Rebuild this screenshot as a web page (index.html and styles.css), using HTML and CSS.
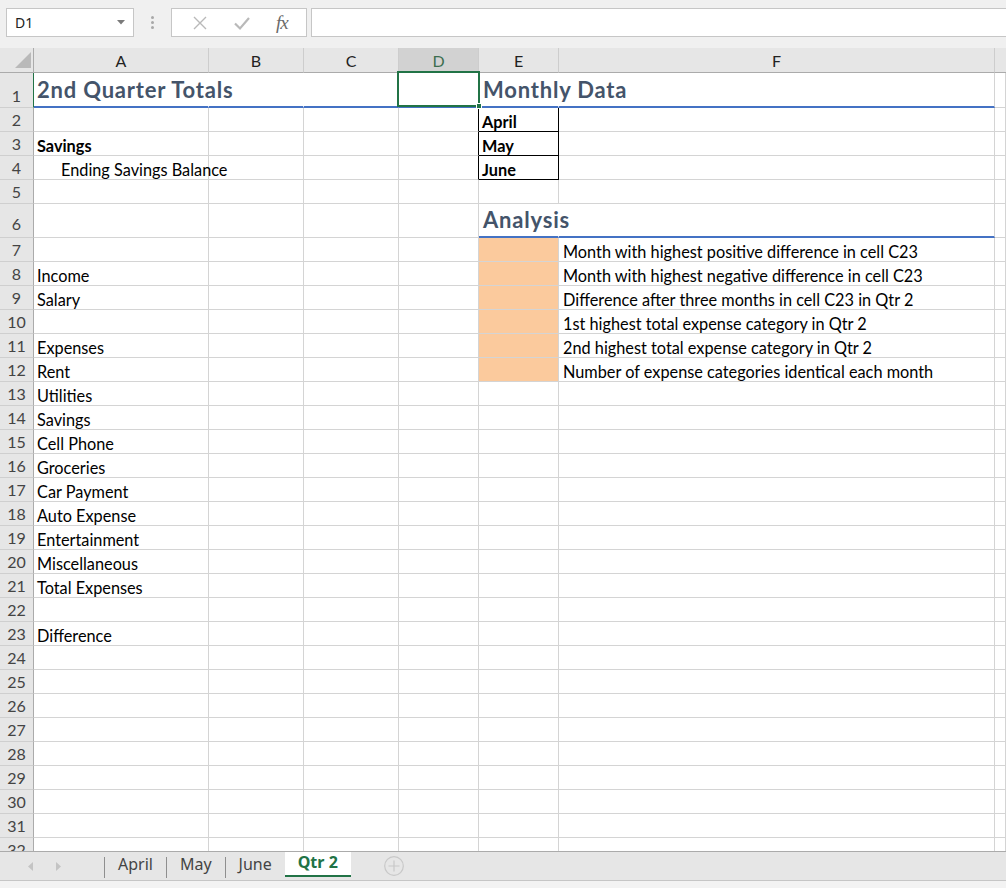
FILE: index.html
```html
<!DOCTYPE html>
<html>
<head>
<meta charset="utf-8">
<link rel="stylesheet" href="styles.css">
</head>
<body>
<div class="toolbar">
  <div class="namebox"><span>D1</span><svg class="dd" width="8" height="5" viewBox="0 0 8 5"><path d="M0 0H8L4 4.5Z" fill="#7a7a7a"/></svg></div>
  <div class="dots"><i></i><i></i><i></i></div>
  <div class="fbuttons">
    <svg width="16" height="16" viewBox="0 0 16 16"><path d="M2 2L14 14M14 2L2 14" stroke="#b9b9b9" stroke-width="1.4" fill="none"/></svg>
    <svg width="18" height="16" viewBox="0 0 18 16"><path d="M2 8.5L7 13.5L16 3" stroke="#b9b9b9" stroke-width="2.2" fill="none"/></svg>
    <span class="fx">fx</span>
  </div>
  <div class="finput"></div>
</div>

<div class="sheet">
  <div class="row hdr">
    <div class="corner"><svg width="34" height="24" viewBox="0 0 34 24"><path d="M15 20H31V4Z" fill="#b9b9b9"/></svg></div>
    <div class="hc">A</div><div class="hc">B</div><div class="hc">C</div><div class="hc sel">D</div><div class="hc">E</div><div class="hc">F</div><div class="hc last"></div>
  </div>
  <div class="row r1">
    <div class="rh selrow">1</div>
    <div class="c t bl nr"><span class="title">2nd Quarter Totals</span></div>
    <div class="c t bl nr"></div><div class="c t bl"></div><div class="c t bl"></div>
    <div class="c t bl nr e"><span class="title">Monthly Data</span></div>
    <div class="c t bl"></div><div class="c"></div>
  </div>
  <div class="row"><div class="rh">2</div><div class="c"></div><div class="c"></div><div class="c"></div><div class="c kr"></div><div class="c box b">April</div><div class="c"></div><div class="c"></div></div>
  <div class="row"><div class="rh">3</div><div class="c b">Savings</div><div class="c"></div><div class="c"></div><div class="c kr"></div><div class="c box b">May</div><div class="c"></div><div class="c"></div></div>
  <div class="row"><div class="rh">4</div><div class="c ind">Ending Savings Balance</div><div class="c"></div><div class="c"></div><div class="c kr"></div><div class="c box b">June</div><div class="c"></div><div class="c"></div></div>
  <div class="row"><div class="rh">5</div><div class="c"></div><div class="c"></div><div class="c"></div><div class="c"></div><div class="c"></div><div class="c"></div><div class="c"></div></div>
  <div class="row r6">
    <div class="rh">6</div><div class="c"></div><div class="c"></div><div class="c"></div><div class="c"></div>
    <div class="c t bl nr e"><span class="title">Analysis</span></div>
    <div class="c t bl"></div><div class="c"></div>
  </div>
  <div class="row"><div class="rh">7</div><div class="c"></div><div class="c"></div><div class="c"></div><div class="c"></div><div class="c or"></div><div class="c f">Month with highest positive difference in cell C23</div><div class="c"></div></div>
  <div class="row"><div class="rh">8</div><div class="c">Income</div><div class="c"></div><div class="c"></div><div class="c"></div><div class="c or"></div><div class="c f">Month with highest negative difference in cell C23</div><div class="c"></div></div>
  <div class="row"><div class="rh">9</div><div class="c">Salary</div><div class="c"></div><div class="c"></div><div class="c"></div><div class="c or"></div><div class="c f">Difference after three months in cell C23 in Qtr 2</div><div class="c"></div></div>
  <div class="row"><div class="rh">10</div><div class="c"></div><div class="c"></div><div class="c"></div><div class="c"></div><div class="c or"></div><div class="c f">1st highest total expense category in Qtr 2</div><div class="c"></div></div>
  <div class="row"><div class="rh">11</div><div class="c">Expenses</div><div class="c"></div><div class="c"></div><div class="c"></div><div class="c or"></div><div class="c f">2nd highest total expense category in Qtr 2</div><div class="c"></div></div>
  <div class="row"><div class="rh">12</div><div class="c">Rent</div><div class="c"></div><div class="c"></div><div class="c"></div><div class="c or"></div><div class="c f">Number of expense categories identical each month</div><div class="c"></div></div>
  <div class="row"><div class="rh">13</div><div class="c">Utilities</div><div class="c"></div><div class="c"></div><div class="c"></div><div class="c"></div><div class="c"></div><div class="c"></div></div>
  <div class="row"><div class="rh">14</div><div class="c">Savings</div><div class="c"></div><div class="c"></div><div class="c"></div><div class="c"></div><div class="c"></div><div class="c"></div></div>
  <div class="row"><div class="rh">15</div><div class="c">Cell Phone</div><div class="c"></div><div class="c"></div><div class="c"></div><div class="c"></div><div class="c"></div><div class="c"></div></div>
  <div class="row"><div class="rh">16</div><div class="c">Groceries</div><div class="c"></div><div class="c"></div><div class="c"></div><div class="c"></div><div class="c"></div><div class="c"></div></div>
  <div class="row"><div class="rh">17</div><div class="c">Car Payment</div><div class="c"></div><div class="c"></div><div class="c"></div><div class="c"></div><div class="c"></div><div class="c"></div></div>
  <div class="row"><div class="rh">18</div><div class="c">Auto Expense</div><div class="c"></div><div class="c"></div><div class="c"></div><div class="c"></div><div class="c"></div><div class="c"></div></div>
  <div class="row"><div class="rh">19</div><div class="c">Entertainment</div><div class="c"></div><div class="c"></div><div class="c"></div><div class="c"></div><div class="c"></div><div class="c"></div></div>
  <div class="row"><div class="rh">20</div><div class="c">Miscellaneous</div><div class="c"></div><div class="c"></div><div class="c"></div><div class="c"></div><div class="c"></div><div class="c"></div></div>
  <div class="row"><div class="rh">21</div><div class="c">Total Expenses</div><div class="c"></div><div class="c"></div><div class="c"></div><div class="c"></div><div class="c"></div><div class="c"></div></div>
  <div class="row"><div class="rh">22</div><div class="c"></div><div class="c"></div><div class="c"></div><div class="c"></div><div class="c"></div><div class="c"></div><div class="c"></div></div>
  <div class="row"><div class="rh">23</div><div class="c">Difference</div><div class="c"></div><div class="c"></div><div class="c"></div><div class="c"></div><div class="c"></div><div class="c"></div></div>
  <div class="row"><div class="rh">24</div><div class="c"></div><div class="c"></div><div class="c"></div><div class="c"></div><div class="c"></div><div class="c"></div><div class="c"></div></div>
  <div class="row"><div class="rh">25</div><div class="c"></div><div class="c"></div><div class="c"></div><div class="c"></div><div class="c"></div><div class="c"></div><div class="c"></div></div>
  <div class="row"><div class="rh">26</div><div class="c"></div><div class="c"></div><div class="c"></div><div class="c"></div><div class="c"></div><div class="c"></div><div class="c"></div></div>
  <div class="row"><div class="rh">27</div><div class="c"></div><div class="c"></div><div class="c"></div><div class="c"></div><div class="c"></div><div class="c"></div><div class="c"></div></div>
  <div class="row"><div class="rh">28</div><div class="c"></div><div class="c"></div><div class="c"></div><div class="c"></div><div class="c"></div><div class="c"></div><div class="c"></div></div>
  <div class="row"><div class="rh">29</div><div class="c"></div><div class="c"></div><div class="c"></div><div class="c"></div><div class="c"></div><div class="c"></div><div class="c"></div></div>
  <div class="row"><div class="rh">30</div><div class="c"></div><div class="c"></div><div class="c"></div><div class="c"></div><div class="c"></div><div class="c"></div><div class="c"></div></div>
  <div class="row"><div class="rh">31</div><div class="c"></div><div class="c"></div><div class="c"></div><div class="c"></div><div class="c"></div><div class="c"></div><div class="c"></div></div>
  <div class="row"><div class="rh">32</div><div class="c"></div><div class="c"></div><div class="c"></div><div class="c"></div><div class="c"></div><div class="c"></div><div class="c"></div></div>
  <div class="selbox"><span class="handle"></span></div>
</div>

<div class="tabs">
  <div class="nav">
    <svg width="6" height="9" viewBox="0 0 6 9"><path d="M5 0V9L0 4.5Z" fill="#c4c4c4"/></svg>
    <svg width="6" height="9" viewBox="0 0 6 9"><path d="M1 0V9L6 4.5Z" fill="#c4c4c4"/></svg>
  </div>
  <span class="sep"></span>
  <div class="tab">April</div>
  <span class="sep"></span>
  <div class="tab">May</div>
  <span class="sep"></span>
  <div class="tab">June</div>
  <div class="tab active">Qtr 2</div>
  <div class="add"><svg width="22" height="22" viewBox="0 0 22 22"><circle cx="11" cy="11" r="9.3" fill="none" stroke="#c8c8c8" stroke-width="1.2"/><path d="M11 5.5V16.5M5.5 11H16.5" stroke="#c8c8c8" stroke-width="1.2"/></svg></div>
</div>
<div class="status"></div>
</body>
</html>
```
FILE: styles.css
```css
* { box-sizing: border-box; }
body {
  margin: 0;
  width: 1006px;
  height: 888px;
  overflow: hidden;
  background: #fff;
  font-family: Lato, "Noto Sans", sans-serif;
  color: #000;
}

/* formula bar */
.toolbar {
  height: 48px;
  background: #f0f0f0;
  display: flex;
  align-items: flex-start;
  padding: 8px 0 0 6px;
}
.namebox {
  width: 128px;
  height: 29px;
  background: #fff;
  border: 1px solid #c6c6c6;
  display: flex;
  align-items: center;
  justify-content: space-between;
  padding: 0 8px 0 8px;
  font-family: "Noto Sans", sans-serif;
  font-size: 14px;
  color: #222;
}
.dots {
  width: 37px;
  height: 29px;
  display: flex;
  flex-direction: column;
  align-items: center;
  justify-content: center;
  gap: 2px;
}
.dots i {
  width: 3px;
  height: 3px;
  background: #a8a8a8;
  border-radius: 50%;
}
.fbuttons {
  width: 136px;
  height: 29px;
  background: #fff;
  border: 1px solid #c6c6c6;
  display: flex;
  align-items: center;
  justify-content: space-around;
  padding: 0 6px 0 8px;
}
.fx {
  font-family: "Liberation Serif", serif;
  font-style: italic;
  font-size: 19px;
  color: #6a6a6a;
  letter-spacing: -1px;
}
.finput {
  flex: 1;
  height: 29px;
  margin-left: 4px;
  background: #fff;
  border: 1px solid #c6c6c6;
  border-right: none;
}

/* grid */
.sheet {
  position: relative;
  height: 803px;
  overflow: hidden;
}
.row {
  display: grid;
  grid-template-columns: 34px 175px 95px 95px 80px 80px 436px 1fr;
  height: 24px;
}
.row.hdr { height: 25px; }
.row.r1 { height: 35px; }
.row.r6 { height: 34px; }

.corner {
  background: #e6e6e6;
  border-right: 1px solid #ababab;
  border-bottom: 1px solid #ababab;
}
.corner svg { display: block; }
.hc {
  background: #e6e6e6;
  border-right: 1px solid #cdcdcd;
  border-bottom: 1px solid #ababab;
  display: flex;
  align-items: center;
  justify-content: center;
  font-size: 16px;
  color: #222;
  padding-top: 1px;
}
.hc.sel { background: #d2d2d2; color: #3c6e4f; }
.hc.last { border-right: none; }

.rh {
  background: #e6e6e6;
  border-right: 1px solid #ababab;
  border-bottom: 1px solid #cfcfcf;
  display: flex;
  align-items: flex-end;
  justify-content: center;
  padding-bottom: 2px;
  font-size: 16px;
  line-height: 19px;
  color: #444;
}
.rh.selrow { border-right: 1px solid #217346; }
.r6 .rh { padding-bottom: 4px; }

.c {
  border-right: 1px solid #d4d4d4;
  border-bottom: 1px solid #d4d4d4;
  font-size: 16.3px;
  line-height: 19px;
  padding: 0 3px 0 3px;
  display: flex;
  align-items: flex-end;
  white-space: nowrap;
}
.c.b { font-weight: 700; }
.c.ind { padding-left: 27px; }
.c.f { padding-left: 4px; }
.c.t { padding-bottom: 4px; }
.c.e { padding-left: 4px; }
.c.bl { border-bottom: 2px solid #4472c4; }
.c.nr { border-right-color: transparent; }
.c.kr { border-right-color: #000; }
.c.box { border-right-color: #000; border-bottom-color: #000; }
.c.or { background: #fbca9d; }
.title {
  font-size: 22px;
  line-height: 25px;
  font-weight: 700;
  letter-spacing: 0.8px;
  color: #44546a;
}

.selbox {
  position: absolute;
  left: 397px;
  top: 23px;
  width: 83px;
  height: 36px;
  border: 2px solid #217346;
}
.handle {
  position: absolute;
  right: -4px;
  bottom: -4px;
  width: 6px;
  height: 6px;
  background: #217346;
  border: 1px solid #fff;
}

/* sheet tabs */
.tabs {
  height: 29px;
  background: #e6e6e6;
  border-top: 1px solid #ababab;
  display: flex;
  align-items: stretch;
  font-family: "Noto Sans", sans-serif;
  font-size: 16px;
  color: #444;
}
.nav {
  width: 104px;
  display: flex;
  align-items: center;
  gap: 21px;
  padding-left: 28px;
}
.sep {
  width: 1px;
  height: 21px;
  align-self: center;
  background: #8f8f8f;
  margin-top: 2px;
}
.tab {
  display: flex;
  align-items: center;
  padding: 0 13px 5px 13px;
}
.tab.active {
  background: #fff;
  color: #217346;
  font-weight: 700;
  width: 66px;
  justify-content: center;
  padding: 0 0 3px 0;
  margin-bottom: 3px;
  border-bottom: 2px solid #217346;
}
.add {
  display: flex;
  align-items: center;
  padding-left: 32px;
}
.add svg { display: block; }
.status {
  height: 8px;
  background: #f3f3f3;
  border-top: 1px solid #c6c6c6;
}
```
